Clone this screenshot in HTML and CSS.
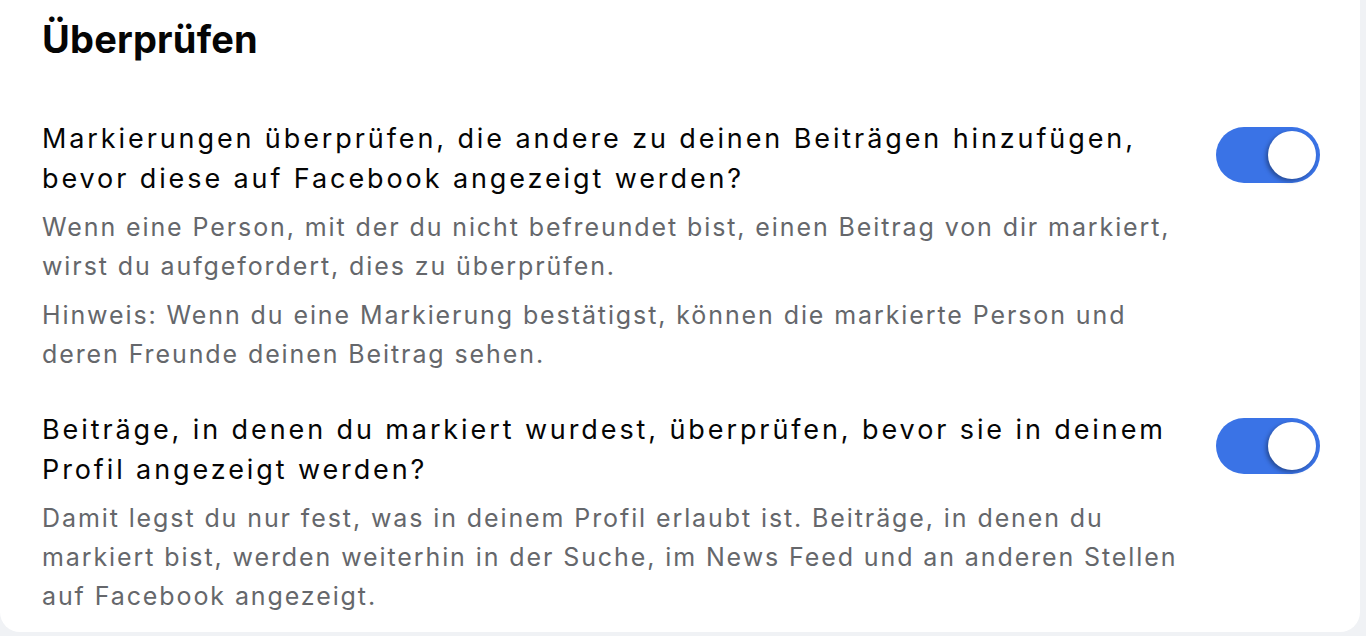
FILE: index.html
```html
<!DOCTYPE html>
<html lang="de">
<head>
<meta charset="utf-8">
<title>Überprüfen</title>
<link rel="stylesheet" href="styles.css">
</head>
<body>
<div class="card">
  <h1 class="title">Überprüfen</h1>
  <div class="row first">
    <div class="text">
      <h2 class="heading">Markierungen überprüfen, die andere zu deinen Beiträgen hinzufügen, bevor diese auf Facebook angezeigt werden?</h2>
      <p class="desc">Wenn eine Person, mit der du nicht befreundet bist, einen Beitrag von dir markiert, wirst du aufgefordert, dies zu überprüfen.</p>
      <p class="desc">Hinweis: Wenn du eine Markierung bestätigst, können die markierte Person und deren Freunde deinen Beitrag sehen.</p>
    </div>
    <div class="toggle on" role="switch" aria-checked="true"><span class="knob"></span></div>
  </div>
  <div class="row">
    <div class="text">
      <h2 class="heading">Beiträge, in denen du markiert wurdest, überprüfen, bevor sie in deinem Profil angezeigt werden?</h2>
      <p class="desc">Damit legst du nur fest, was in deinem Profil erlaubt ist. Beiträge, in denen du markiert bist, werden weiterhin in der Suche, im News Feed und an anderen Stellen auf Facebook angezeigt.</p>
    </div>
    <div class="toggle on" role="switch" aria-checked="true"><span class="knob"></span></div>
  </div>
</div>
</body>
</html>
```

FILE: styles.css
```css
* { box-sizing: border-box; }
html, body { margin: 0; padding: 0; }
body {
  background: #f0f2f5;
  font-family: Inter, "Noto Sans", "Liberation Sans", sans-serif;
  height: 636px;
  overflow: hidden;
}
.card {
  width: 1360px;
  background: #fff;
  border-radius: 0 0 20px 20px;
  padding: 14px 40px 16px 42px;
}
.title {
  margin: 0;
  font-size: 38px;
  line-height: 50px;
  font-weight: 700;
  color: #050505;
  letter-spacing: 0.2px;
}
.row {
  display: flex;
  align-items: flex-start;
  gap: 30px;
  margin-top: 36px;
}
.row.first { margin-top: 55px; }
.text { flex: 1; min-width: 0; }
.heading {
  margin: 0 0 9px;
  font-size: 27px;
  line-height: 40px;
  font-weight: 400;
  color: #050505;
  letter-spacing: 2.9px;
}
.desc {
  margin: 0;
  font-size: 25px;
  line-height: 39px;
  color: #65676b;
  letter-spacing: 1.9px;
}
.desc + .desc { margin-top: 10px; }
.toggle {
  flex: none;
  width: 104px;
  height: 56px;
  border-radius: 28px;
  background: #3a73e6;
  position: relative;
  margin-top: 8px;
}
.knob {
  position: absolute;
  top: 4px;
  right: 4px;
  width: 48px;
  height: 48px;
  border-radius: 50%;
  background: #fff;
  box-shadow: -2px 2px 4px rgba(0, 0, 0, 0.35);
}
```
